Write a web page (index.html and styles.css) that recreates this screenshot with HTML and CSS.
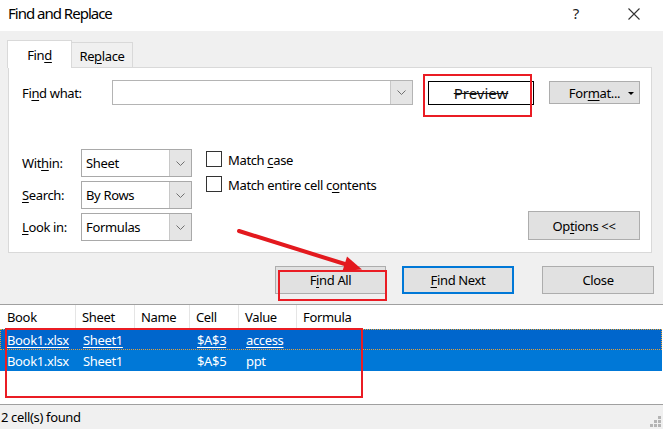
FILE: index.html
```html
<!DOCTYPE html>
<html>
<head>
<meta charset="utf-8">
<title>Find and Replace</title>
<link rel="stylesheet" href="styles.css">
</head>
<body>
<div class="dialog">
  <header class="titlebar">
    <span class="title">Find and Replace</span>
    <span class="help">?</span>
    <svg class="close-x" width="12" height="12" viewBox="0 0 12 12"><path d="M0.5 0.5 L11.5 11.5 M11.5 0.5 L0.5 11.5" stroke="#333" stroke-width="1.1" fill="none"/></svg>
  </header>

  <div class="content">
    <div class="tabs">
      <div class="tab tab-active">Fin<u>d</u></div>
      <div class="tab tab-idle">Re<u>p</u>lace</div>
    </div>

    <div class="panel">
      <div class="row-find">
        <span class="lbl-find">Fi<u>n</u>d what:</span>
        <div class="combo combo-find">
          <div class="combo-text"></div>
          <div class="combo-btn"><svg width="9" height="5" viewBox="0 0 9 5"><path d="M0.5 0.5 L4.5 4.5 L8.5 0.5" stroke="#707070" fill="none"/></svg></div>
        </div>
        <div class="preview-wrap">
          <div class="preview">Preview</div>
          <div class="redbox redbox-preview"></div>
        </div>
        <div class="btn btn-format">For<u>m</u>at...<span class="caret"></span></div>
      </div>

      <div class="row-opts">
        <div class="fields">
          <span class="lbl">Wit<u>h</u>in:</span>
          <div class="combo"><div class="combo-text">Sheet</div><div class="combo-btn"><svg width="9" height="5" viewBox="0 0 9 5"><path d="M0.5 0.5 L4.5 4.5 L8.5 0.5" stroke="#707070" fill="none"/></svg></div></div>
          <span class="lbl"><u>S</u>earch:</span>
          <div class="combo"><div class="combo-text">By Rows</div><div class="combo-btn"><svg width="9" height="5" viewBox="0 0 9 5"><path d="M0.5 0.5 L4.5 4.5 L8.5 0.5" stroke="#707070" fill="none"/></svg></div></div>
          <span class="lbl"><u>L</u>ook in:</span>
          <div class="combo"><div class="combo-text">Formulas</div><div class="combo-btn"><svg width="9" height="5" viewBox="0 0 9 5"><path d="M0.5 0.5 L4.5 4.5 L8.5 0.5" stroke="#707070" fill="none"/></svg></div></div>
        </div>
        <div class="checks">
          <div class="check"><span class="box"></span><span class="check-text">Match <u>c</u>ase</span></div>
          <div class="check"><span class="box"></span><span class="check-text">Match entire cell c<u>o</u>ntents</span></div>
        </div>
        <div class="btn btn-options">Op<u>t</u>ions &lt;&lt;</div>
      </div>
    </div>

    <div class="actions">
      <div class="btn btn-action btn-findall">F<u>i</u>nd All<div class="redbox redbox-findall"></div></div>
      <div class="btn btn-action btn-findnext"><u>F</u>ind Next</div>
      <div class="btn btn-action btn-close">Close</div>
    </div>
  </div>

  <div class="results">
    <div class="grid head">
      <div class="cell">Book</div>
      <div class="cell">Sheet</div>
      <div class="cell">Name</div>
      <div class="cell">Cell</div>
      <div class="cell">Value</div>
      <div class="cell">Formula</div>
    </div>
    <div class="grid row row-focus">
      <div class="cell"><u>Book1.xlsx</u></div>
      <div class="cell"><u>Sheet1</u></div>
      <div class="cell"></div>
      <div class="cell"><u>$A$3</u></div>
      <div class="cell"><u>access</u></div>
      <div class="cell"></div>
    </div>
    <div class="grid row row-sel">
      <div class="cell">Book1.xlsx</div>
      <div class="cell">Sheet1</div>
      <div class="cell"></div>
      <div class="cell">$A$5</div>
      <div class="cell">ppt</div>
      <div class="cell"></div>
    </div>
    <div class="redbox redbox-results"></div>
  </div>

  <footer class="status">
    <span>2 cell(s) found</span>
    <svg class="grip" width="11" height="11" viewBox="0 0 11 11">
      <rect x="8" y="0" width="3" height="3" fill="#b4b4b4"/>
      <rect x="4" y="4" width="3" height="3" fill="#b4b4b4"/>
      <rect x="8" y="4" width="3" height="3" fill="#b4b4b4"/>
      <rect x="0" y="8" width="3" height="3" fill="#b4b4b4"/>
      <rect x="4" y="8" width="3" height="3" fill="#b4b4b4"/>
      <rect x="8" y="8" width="3" height="3" fill="#b4b4b4"/>
    </svg>
  </footer>
</div>

<svg class="arrow" width="663" height="429" viewBox="0 0 663 429">
  <line x1="239" y1="231" x2="348" y2="265" stroke="#e3191e" stroke-width="4" stroke-linecap="round"/>
  <polygon points="362,269.5 342.5,271 347,256.5" fill="#e3191e"/>
</svg>
</body>
</html>
```

FILE: styles.css
```css
* { box-sizing: border-box; }

html, body {
  margin: 0;
  padding: 0;
}

body {
  width: 663px;
  height: 429px;
  overflow: hidden;
  background: #f0f0f0;
  font-family: "Noto Sans", "Segoe UI", sans-serif;
  font-size: 13px;
  letter-spacing: -0.35px;
  color: #000;
  position: relative;
}

u { text-decoration: underline; text-underline-offset: 2px; text-decoration-thickness: 1px; }

.dialog {
  display: flex;
  flex-direction: column;
  height: 429px;
}

/* Title bar */
.titlebar {
  height: 31px;
  background: #fff;
  display: flex;
  align-items: center;
  padding: 0 0 5px 8px;
}
.title {
  font-size: 15px;
  letter-spacing: -1px;
  flex: 1;
}
.help {
  font-size: 15px;
  color: #222;
  margin-right: 49px;
}
.close-x {
  margin-right: 23px;
  margin-top: 2px;
}

/* Main content */
.content {
  padding: 9px 0 0 7px;
}

.tabs {
  display: flex;
  align-items: flex-end;
  height: 27px;
}
.tab {
  display: flex;
  align-items: center;
  justify-content: center;
}
.tab-active {
  width: 65px;
  height: 28px;
  margin-bottom: -1px;
  background: #fff;
  border: 1px solid #d9d9d9;
  border-bottom: none;
  position: relative;
  z-index: 1;
  padding-top: 1px;
}
.tab-idle {
  width: 61px;
  height: 25px;
  background: #f0f0f0;
  border: 1px solid #d9d9d9;
  border-left: none;
  border-bottom: none;
  padding-top: 2px;
}

.panel {
  margin-left: 1px;
  width: 644px;
  height: 186px;
  background: #fff;
  border: 1px solid #d9d9d9;
  padding: 12px 11px 0 13px;
}

.row-find {
  display: flex;
  align-items: center;
  height: 25px;
}
.lbl-find {
  width: 90px;
}

.combo {
  display: flex;
  height: 28px;
  border: 1px solid #a9a9a9;
  background: #fff;
}
.combo-find {
  width: 301px;
  height: 25px;
  border-color: #b4b4b4;
}
.combo-text {
  flex: 1;
  display: flex;
  align-items: center;
  padding-left: 4px;
}
.combo-btn {
  width: 22px;
  background: #e5e5e5;
  border-left: 1px solid #c8c8c8;
  display: flex;
  align-items: center;
  justify-content: center;
}

.preview-wrap {
  position: relative;
  margin-left: 15px;
}
.preview {
  width: 106px;
  height: 24px;
  border: 1px solid #000;
  background: #fff;
  display: flex;
  align-items: center;
  justify-content: center;
  font-size: 15px;
  letter-spacing: 0;
  text-decoration: line-through;
  text-decoration-thickness: 1px;
  color: #111;
}

.redbox {
  position: absolute;
  border: 2px solid #ea1c24;
  pointer-events: none;
}
.redbox-preview {
  left: -5px;
  top: -7px;
  width: 109px;
  height: 43px;
}

.btn {
  background: #e1e1e1;
  border: 1px solid #adadad;
  display: flex;
  align-items: center;
  justify-content: center;
}
.btn-format {
  margin-left: 15px;
  width: 91px;
  height: 23px;
  position: relative;
}
.caret {
  position: absolute;
  right: 5px;
  top: 10px;
  width: 0;
  height: 0;
  border-left: 3px solid transparent;
  border-right: 3px solid transparent;
  border-top: 3px solid #000;
}

.row-opts {
  display: flex;
  margin-top: 44px;
}
.fields {
  display: grid;
  grid-template-columns: 59px 111px;
  grid-auto-rows: 28px;
  row-gap: 4px;
  align-items: center;
}
.checks {
  margin-left: 14px;
  padding-top: 2px;
  display: flex;
  flex-direction: column;
  gap: 10px;
}
.check {
  display: flex;
  align-items: center;
  height: 15px;
}
.check-text {
  position: relative;
  top: 1px;
}
.box {
  width: 16px;
  height: 16px;
  border: 1px solid #333;
  background: #fff;
  margin-right: 6px;
}
.btn-options {
  margin-left: auto;
  align-self: flex-end;
  margin-bottom: 1px;
  width: 112px;
  height: 29px;
}

.actions {
  display: flex;
  justify-content: flex-end;
  margin-top: 13px;
  padding-right: 9px;
}
.btn-action {
  height: 28px;
  width: 112px;
}
.btn-findall {
  width: 111px;
  margin-right: 16px;
  position: relative;
}
.btn-findnext {
  border: 2px solid #0078d7;
  margin-right: 28px;
}
.redbox-findall {
  left: 2px;
  top: 3px;
  width: 109px;
  height: 31px;
}

/* Results list */
.results {
  margin-top: 10px;
  height: 101px;
  background: #fff;
  border-top: 1px solid #a0a0a0;
  border-bottom: 1px solid #a0a0a0;
  position: relative;
}
.grid {
  display: grid;
  grid-template-columns: 76px 59px 55px 49px 58px 1fr;
  margin-right: 1px;
}
.cell {
  padding-left: 7px;
  display: flex;
  align-items: center;
  white-space: nowrap;
}
.head {
  height: 24px;
}
.head .cell {
  border-right: 1px solid #e5e5e5;
  padding-left: 6px;
}
.head .cell:first-child { padding-left: 7px; }
.head .cell:last-child { border-right: none; }
.row {
  height: 21px;
  color: #fff;
}
.row-focus {
  background: #0066cc;
  outline: 1px dotted #e8a33a;
  outline-offset: -1px;
}
.row-sel {
  background: #0078d7;
}
.row .cell:first-child { padding-left: 7px; }

.redbox-results {
  left: 5px;
  top: 23px;
  width: 358px;
  height: 70px;
}

.status {
  flex: 1;
  display: flex;
  align-items: center;
  justify-content: space-between;
  padding: 0 2px 0 1px;
}
.grip {
  align-self: flex-end;
  margin-bottom: 2px;
}

.arrow {
  position: absolute;
  left: 0;
  top: 0;
  pointer-events: none;
}
```
